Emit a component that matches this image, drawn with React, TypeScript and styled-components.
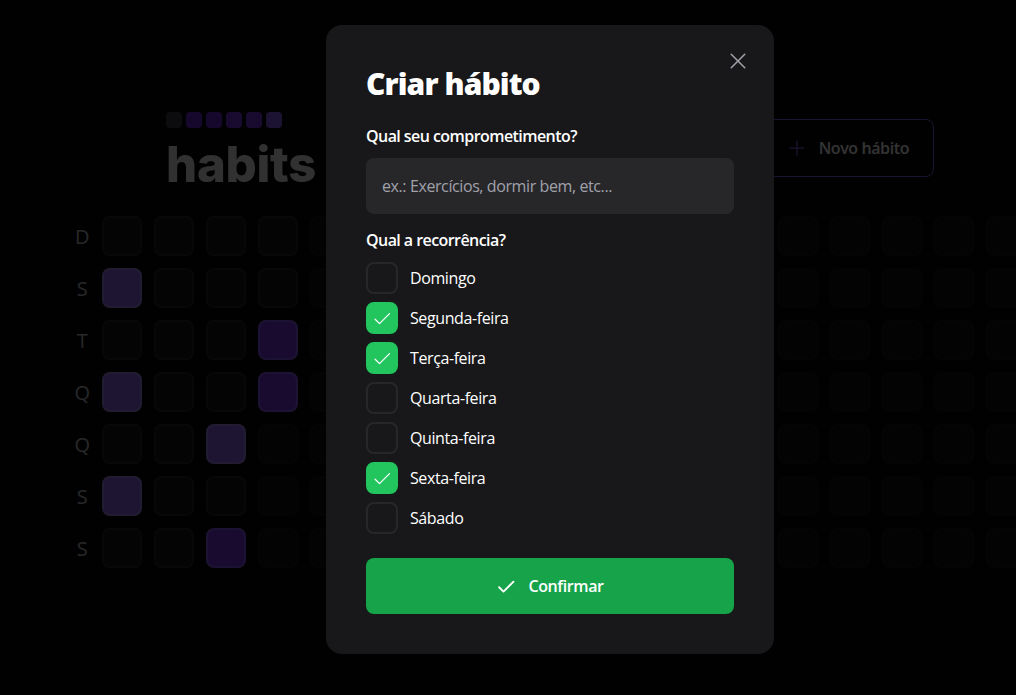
import React from "react";
import styled, { createGlobalStyle } from "styled-components";

const GlobalStyle = createGlobalStyle`
  * { box-sizing: border-box; }
  html, body { margin: 0; padding: 0; background: #09090a; color: #fff; overflow: hidden; }
  body { font-family: "Open Sans", "Noto Sans", sans-serif; letter-spacing: -0.025em; -webkit-font-smoothing: antialiased; }
  button, input { letter-spacing: inherit; }
`;

const Page = styled.div`
  width: 1016px;
  height: 695px;
  overflow: hidden;
  display: flex;
  flex-direction: column;
  padding: 112px 0 0 62px;
`;

const Header = styled.header`
  margin-left: 104px;
  width: 768px;
  display: flex;
  justify-content: space-between;
  align-items: flex-start;
`;

const Logo = styled.div`
  display: flex;
  flex-direction: column;
  gap: 13px;
`;

const LogoSquares = styled.div`
  display: flex;
  gap: 4px;
`;

const LogoSquare = styled.span<{ $c: string }>`
  width: 16px;
  height: 16px;
  border-radius: 4px;
  background: ${(p) => p.$c};
`;

const LogoText = styled.span`
  font-family: Inter, sans-serif;
  font-weight: 800;
  font-size: 49px;
  line-height: 48px;
  letter-spacing: -0.005em;
  color: #f4f4f5;
`;

const NewHabitButton = styled.button`
  margin-top: 7px;
  display: flex;
  align-items: center;
  gap: 12px;
  padding: 16px 24px;
  border: 1px solid #8b5cf6;
  border-radius: 8px;
  background: transparent;
  color: #fff;
  font: 600 16px/24px "Open Sans", sans-serif;
`;

const Summary = styled.div`
  margin-top: 27px;
  display: flex;
`;

const DayLabels = styled.div`
  display: grid;
  grid-template-rows: repeat(7, 40px);
  gap: 12px;
  width: 40px;
  flex-shrink: 0;
`;

const DayLabel = styled.div`
  display: flex;
  align-items: center;
  justify-content: center;
  color: #c4c4cc;
  font-size: 20px;
  font-weight: 400;
`;

const Cells = styled.div`
  display: grid;
  grid-template-rows: repeat(7, 40px);
  grid-auto-flow: column;
  grid-auto-columns: 40px;
  gap: 12px;
`;

const levelColors: Record<number, [string, string]> = {
  0: ["#18181b", "#27272a"],
  1: ["#7c3aed", "#8b5cf6"],
  2: ["#9068f8", "#a78bfa"],
};

const Cell = styled.div<{ $level: number; $future?: boolean }>`
  width: 40px;
  height: 40px;
  border-radius: 8px;
  border: 2px solid ${(p) => levelColors[p.$level][1]};
  background: ${(p) => levelColors[p.$level][0]};
  opacity: ${(p) => (p.$future ? 0.4 : 1)};
`;

const Overlay = styled.div`
  position: fixed;
  inset: 0;
  background: rgba(0, 0, 0, 0.8);
`;

const Dialog = styled.div`
  position: fixed;
  top: 25px;
  left: 326px;
  width: 448px;
  padding: 40px;
  border-radius: 16px;
  background: #18181b;
`;

const CloseButton = styled.button`
  position: absolute;
  top: 24px;
  right: 24px;
  width: 24px;
  height: 24px;
  padding: 0;
  border: 0;
  background: none;
  color: #a1a1aa;
  display: flex;
`;

const Title = styled.h2`
  margin: 0;
  font-size: 30px;
  line-height: 37px;
  font-weight: 800;
  letter-spacing: -0.03em;
  color: #fff;
`;

const Form = styled.form`
  margin-top: 24px;
  display: flex;
  flex-direction: column;
`;

const Label = styled.label<{ $mt?: number }>`
  font-weight: 600;
  font-size: 16px;
  line-height: 20px;
  letter-spacing: -0.035em;
  margin-top: ${(p) => p.$mt ?? 0}px;
`;

const Input = styled.input`
  margin-top: 12px;
  padding: 16px;
  border-radius: 8px;
  background: #27272a;
  color: #fff;
  border: 0;
  outline: none;
  font: 400 16px/24px "Open Sans", sans-serif;
  &::placeholder {
    color: #a1a1aa;
  }
`;

const DayList = styled.div`
  margin-top: 12px;
  display: flex;
  flex-direction: column;
  gap: 8px;
`;

const DayRow = styled.div`
  display: flex;
  align-items: center;
  gap: 12px;
  font-size: 16px;
  line-height: 20px;
  color: #fff;
`;

const Box = styled.span<{ $checked: boolean }>`
  width: 32px;
  height: 32px;
  border-radius: 8px;
  border: 2px solid ${(p) => (p.$checked ? "#22c55e" : "#27272a")};
  background: ${(p) => (p.$checked ? "#22c55e" : "#18181b")};
  display: flex;
  align-items: center;
  justify-content: center;
`;

const ConfirmButton = styled.button`
  margin-top: 24px;
  padding: 16px;
  border-radius: 8px;
  border: 0;
  background: #16a34a;
  color: #fff;
  display: flex;
  align-items: center;
  justify-content: center;
  gap: 12px;
  font: 600 16px/24px "Open Sans", sans-serif;
`;

const CheckIcon = ({ size = 20, weight = 16 }: { size?: number; weight?: number }) => (
  <svg width={size} height={size} viewBox="0 0 256 256" fill="none">
    <polyline
      points="40 144 96 200 224 72"
      stroke="currentColor"
      strokeWidth={weight}
      strokeLinecap="round"
      strokeLinejoin="round"
    />
  </svg>
);

const PlusIcon = () => (
  <svg width={20} height={20} viewBox="0 0 256 256" fill="none" stroke="#8b5cf6" strokeWidth={16} strokeLinecap="round">
    <line x1="40" y1="128" x2="216" y2="128" />
    <line x1="128" y1="40" x2="128" y2="216" />
  </svg>
);

const XIcon = () => (
  <svg width={24} height={24} viewBox="0 0 256 256" fill="none" stroke="currentColor" strokeWidth={16} strokeLinecap="round">
    <line x1="200" y1="56" x2="56" y2="200" />
    <line x1="200" y1="200" x2="56" y2="56" />
  </svg>
);

const weekLabels = ["D", "S", "T", "Q", "Q", "S", "S"];
const weekDays = ["Domingo", "Segunda-feira", "Terça-feira", "Quarta-feira", "Quinta-feira", "Sexta-feira", "Sábado"];
const checked = [1, 2, 5];
const logoColors = ["#3f3f46", "#6d28d9", "#6d28d9", "#7c3aed", "#7c3aed", "#8b5cf6"];

const filled: Record<number, number> = {
  1: 2,
  3: 2,
  5: 2,
  18: 2,
  20: 1,
  23: 1,
  24: 1,
};
const TODAY = 24;
const TOTAL = 18 * 7;

export default function App() {
  return (
    <>
      <GlobalStyle />
      <Page>
        <Header>
          <Logo>
            <LogoSquares>
              {logoColors.map((c, i) => (
                <LogoSquare key={i} $c={c} />
              ))}
            </LogoSquares>
            <LogoText>habits</LogoText>
          </Logo>
          <NewHabitButton>
            <PlusIcon />
            Novo hábito
          </NewHabitButton>
        </Header>
        <Summary>
          <DayLabels>
            {weekLabels.map((d, i) => (
              <DayLabel key={i}>{d}</DayLabel>
            ))}
          </DayLabels>
          <Cells>
            {Array.from({ length: TOTAL }, (_, i) => (
              <Cell key={i} $level={filled[i] ?? 0} $future={i > TODAY} />
            ))}
          </Cells>
        </Summary>
      </Page>
      <Overlay />
      <Dialog>
        <CloseButton aria-label="Fechar">
          <XIcon />
        </CloseButton>
        <Title>Criar hábito</Title>
        <Form>
          <Label>Qual seu comprometimento?</Label>
          <Input placeholder="ex.: Exercícios, dormir bem, etc..." />
          <Label $mt={16}>Qual a recorrência?</Label>
          <DayList>
            {weekDays.map((d, i) => {
              const on = checked.includes(i);
              return (
                <DayRow key={d}>
                  <Box $checked={on}>{on && <CheckIcon />}</Box>
                  {d}
                </DayRow>
              );
            })}
          </DayList>
          <ConfirmButton type="button">
            <CheckIcon weight={24} />
            Confirmar
          </ConfirmButton>
        </Form>
      </Dialog>
    </>
  );
}
